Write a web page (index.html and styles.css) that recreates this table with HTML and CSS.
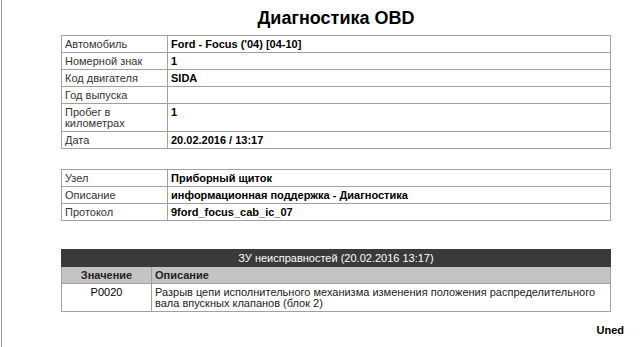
FILE: index.html
```html
<!DOCTYPE html>
<html lang="ru">
<head>
    <meta charset="UTF-8">
    <title>Диагностика OBD</title>
    <link rel="stylesheet" href="styles.css">
</head>
<body>
    <div class="page">
        <div class="report">
            <h1 class="report-title">Диагностика OBD</h1>

            <table class="info">
                <tr><td class="label">Автомобиль</td><td class="value">Ford - Focus ('04) [04-10]</td></tr>
                <tr><td class="label">Номерной знак</td><td class="value">1</td></tr>
                <tr><td class="label">Код двигателя</td><td class="value">SIDA</td></tr>
                <tr><td class="label">Год выпуска</td><td class="value"></td></tr>
                <tr><td class="label">Пробег в<br>километрах</td><td class="value">1</td></tr>
                <tr><td class="label">Дата</td><td class="value">20.02.2016 / 13:17</td></tr>
            </table>

            <table class="info">
                <tr><td class="label">Узел</td><td class="value">Приборный щиток</td></tr>
                <tr><td class="label">Описание</td><td class="value">информационная поддержка - Диагностика</td></tr>
                <tr><td class="label">Протокол</td><td class="value">9ford_focus_cab_ic_07</td></tr>
            </table>

            <table class="faults">
                <tr><th class="caption" colspan="2">ЗУ неисправностей (20.02.2016 13:17)</th></tr>
                <tr><th class="code">Значение</th><th class="desc">Описание</th></tr>
                <tr>
                    <td class="code">P0020</td>
                    <td class="desc">Разрыв цепи исполнительного механизма изменения положения распределительного вала впускных клапанов (блок 2)</td>
                </tr>
            </table>

            <div class="footer">Uned</div>
        </div>
    </div>
</body>
</html>
```

FILE: styles.css
```css
body {
    margin: 0;
    background: #fff;
    font-family: "Liberation Sans", Arial, sans-serif;
    color: #000;
}

.page {
    margin-left: 1px;
    border-left: 1px solid #9a9a9a;
    height: 100vh;
    box-sizing: border-box;
    padding-left: 59px;
}

.report {
    width: 550px;
}

.report-title {
    margin: 0;
    padding-top: 8px;
    height: 27px;
    font-size: 18px;
    line-height: 20px;
    text-align: center;
}

table {
    width: 100%;
    border-collapse: collapse;
    font-size: 11px;
    line-height: 11px;
}

td, th {
    border: 1px solid #a0a0a0;
    padding: 3px 3px 2px;
    text-align: left;
    vertical-align: top;
}

.info {
    margin-bottom: 20px;
}

.info .label {
    width: 99px;
    color: #333;
}

.info .value {
    font-weight: bold;
}

.faults {
    margin-top: 28px;
}

.faults .caption {
    background: #3a3a3a;
    color: #fff;
    font-weight: normal;
    text-align: center;
    border-color: #3a3a3a;
}

.faults th.code,
.faults th.desc {
    background: #c4c4c4;
    font-weight: bold;
    color: #222;
}

.faults .code {
    width: 83px;
    text-align: center;
}

.faults td.desc {
    color: #222;
}

.footer {
    margin-top: 12px;
    margin-right: -13px;
    text-align: right;
    font-size: 11px;
    font-weight: bold;
}
```
